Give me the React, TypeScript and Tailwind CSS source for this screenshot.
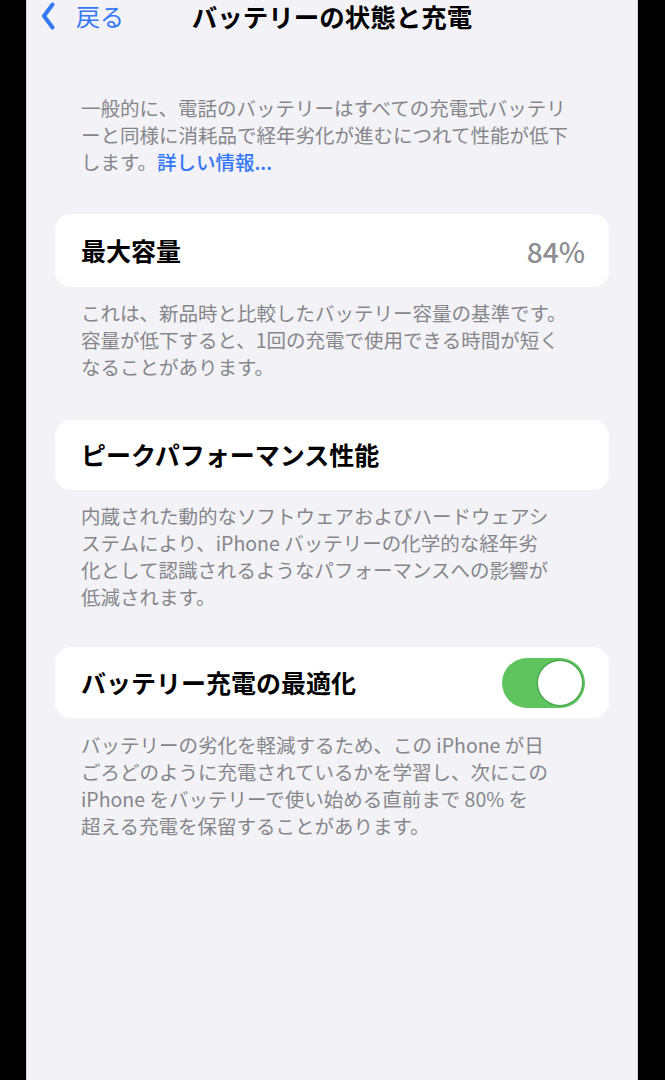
import React, { useState } from 'react'

const FOOT = 'text-[19.5px] leading-[27px] text-[#86868b] whitespace-nowrap'

function Footer({ lines, className = '' }: { lines: React.ReactNode[]; className?: string }) {
  return (
    <div className={`pl-[54px] ${FOOT} ${className}`}>
      {lines.map((l, i) => (
        <div key={i}>{l}</div>
      ))}
    </div>
  )
}

function Card({ children, className = '' }: { children: React.ReactNode; className?: string }) {
  return (
    <div className={`mx-[28px] flex items-center justify-between rounded-[16px] bg-white pl-[26px] pr-[24px] ${className}`}>
      {children}
    </div>
  )
}

function Toggle({ on, onChange }: { on: boolean; onChange: (v: boolean) => void }) {
  return (
    <button
      onClick={() => onChange(!on)}
      className={`flex h-[50px] w-[83px] items-center rounded-full p-[3px] ${on ? 'justify-end bg-[#5fc45f]' : 'justify-start bg-[#e5e5ea]'}`}
    >
      <span className="h-[44px] w-[44px] rounded-full bg-white shadow-[0_0_0_1.5px_rgba(60,150,60,0.55)]" />
    </button>
  )
}

export default function App() {
  const [optimized, setOptimized] = useState(true)

  return (
    <div className="flex h-[1080px] w-full overflow-hidden bg-black pl-[26px] pr-[27px] font-['Noto_Sans_CJK_JP',sans-serif]">
      <div className="flex flex-1 flex-col border-x border-[#d4d4d8] bg-[#f2f2f7]">
        {/* nav bar */}
        <div className="grid h-[32px] grid-cols-[1fr_auto_1fr] items-center">
          <div className="flex items-center pl-[14px] text-[#3478f6]">
            <svg width="14" height="30" viewBox="0 0 14 30" fill="none">
              <path d="M11.5 3.5 L3 15 L11.5 26.5" stroke="currentColor" strokeWidth="4" strokeLinecap="round" strokeLinejoin="round" />
            </svg>
            <span className="ml-[21px] text-[24px] leading-[32px]">戻る</span>
          </div>
          <div className="text-[25.5px] font-bold leading-[32px] text-black">バッテリーの状態と充電</div>
          <div />
        </div>

        <Footer
          className="mt-[62px]"
          lines={[
            '一般的に、電話のバッテリーはすべての充電式バッテリ',
            'ーと同様に消耗品で経年劣化が進むにつれて性能が低下',
            <>
              します。<span className="font-medium text-[#3478f6]">詳しい情報...</span>
            </>,
          ]}
        />

        <Card className="mt-[39px] h-[73px]">
          <span className="text-[25px] font-bold text-black">最大容量</span>
          <span className="text-[28px] font-medium text-[#8e8e93]">84%</span>
        </Card>

        <Footer
          className="mt-[12px]"
          lines={[
            'これは、新品時と比較したバッテリー容量の基準です。',
            '容量が低下すると、1回の充電で使用できる時間が短く',
            'なることがあります。',
          ]}
        />

        <Card className="mt-[40px] h-[70px]">
          <span className="text-[25px] font-bold text-black">ピークパフォーマンス性能</span>
        </Card>

        <Footer
          className="mt-[12px]"
          lines={[
            '内蔵された動的なソフトウェアおよびハードウェアシ',
            'ステムにより、iPhone バッテリーの化学的な経年劣',
            '化として認識されるようなパフォーマンスへの影響が',
            '低減されます。',
          ]}
        />

        <Card className="mt-[37px] h-[71px]">
          <span className="text-[25px] font-bold text-black">バッテリー充電の最適化</span>
          <Toggle on={optimized} onChange={setOptimized} />
        </Card>

        <Footer
          className="mt-[13px]"
          lines={[
            'バッテリーの劣化を軽減するため、この iPhone が日',
            'ごろどのように充電されているかを学習し、次にこの',
            'iPhone をバッテリーで使い始める直前まで 80% を',
            '超える充電を保留することがあります。',
          ]}
        />
      </div>
    </div>
  )
}
